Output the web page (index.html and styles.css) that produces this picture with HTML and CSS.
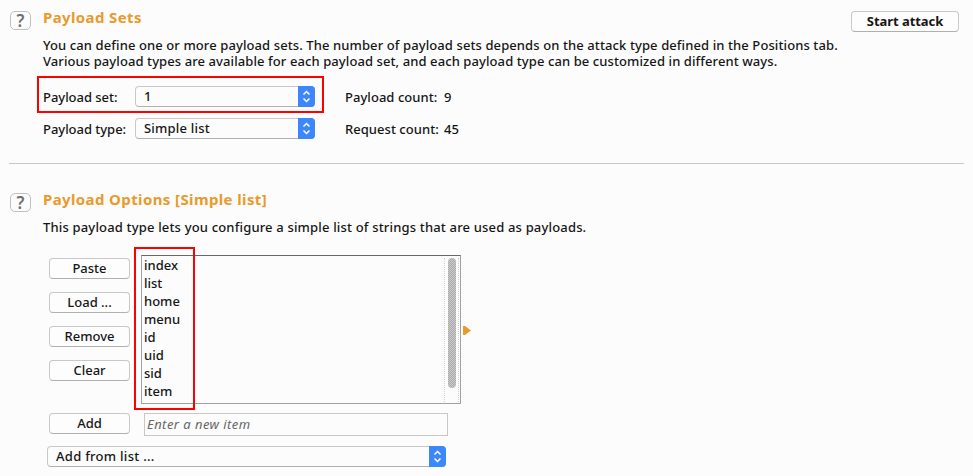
FILE: index.html
```
<!DOCTYPE html>
<html lang="en">
<head>
<meta charset="utf-8">
<title>Payloads</title>
<link rel="stylesheet" href="styles.css">
</head>
<body>
<section class="panel sets">
  <div class="help"><span>?</span></div>
  <div class="content">
    <h2 class="title">Payload Sets</h2>
    <div class="desc">
      <p class="line">You can define one or more payload sets. The number of payload sets depends on the attack type defined in the Positions tab.</p>
      <p class="line second">Various payload types are available for each payload set, and each payload type can be customized in different ways.</p>
    </div>
    <div class="row marked">
      <span class="label">Payload set:</span>
      <div class="select"><span class="value">1</span><span class="stepper"><svg viewBox="0 0 17 21"><path d="M5.5 8.5l3-3 3 3M5.5 12.5l3 3 3-3"/></svg></span></div>
      <span class="count">Payload count:</span><span class="num">9</span>
      <i class="mark"></i>
    </div>
    <div class="row">
      <span class="label">Payload type:</span>
      <div class="select"><span class="value">Simple list</span><span class="stepper"><svg viewBox="0 0 17 21"><path d="M5.5 8.5l3-3 3 3M5.5 12.5l3 3 3-3"/></svg></span></div>
      <span class="count">Request count:</span><span class="num">45</span>
    </div>
  </div>
  <button class="btn start">Start attack</button>
</section>
<hr class="divider">
<section class="panel options">
  <div class="help"><span>?</span></div>
  <div class="content">
    <h2 class="title">Payload Options [Simple list]</h2>
    <div class="desc">
      <p class="line">This payload type lets you configure a simple list of strings that are used as payloads.</p>
    </div>
    <div class="editor">
      <div class="buttons">
        <button class="btn">Paste</button>
        <button class="btn">Load ...</button>
        <button class="btn">Remove</button>
        <button class="btn">Clear</button>
      </div>
      <div class="listbox">
        <ul class="items"><li>index</li><li>list</li><li>home</li><li>menu</li><li>id</li><li>uid</li><li>sid</li><li>item</li></ul>
        <div class="track"><div class="thumb"></div></div>
        <i class="mark"></i>
      </div>
      <svg class="arrow" viewBox="0 0 8 9"><path d="M0 0h2l6 4.5L2 9H0z"/></svg>
    </div>
    <div class="add">
      <button class="btn">Add</button>
      <div class="field">Enter a new item</div>
    </div>
    <div class="select wide"><span class="value">Add from list ...</span><span class="stepper"><svg viewBox="0 0 17 21"><path d="M5.5 8.5l3-3 3 3M5.5 12.5l3 3 3-3"/></svg></span></div>
  </div>
</section>
</body>
</html>
```
FILE: styles.css
```
* { box-sizing: border-box; }
body {
  margin: 0;
  height: 476px;
  overflow: hidden;
  background: #fcfcfc;
  color: #161616;
  font: 500 13px/16px "Noto Sans", sans-serif;
  letter-spacing: 0.1px;
  white-space: nowrap;
}
.panel { display: flex; align-items: flex-start; padding-left: 10px; }
.sets { height: 163px; padding-top: 7px; }
.options { padding-top: 25px; }
.help {
  width: 21px;
  height: 19px;
  margin: 4px 12px 0 0;
  border: 1px solid #c0c0c0;
  border-radius: 5px;
  color: #707070;
  font: 600 17px/17px "Noto Sans", sans-serif;
  text-align: center;
}
.content { flex: 1; }
.title { margin: 0; font-size: 15px; font-weight: 700; line-height: 20px; letter-spacing: 0.38px; color: #e99a2c; }
.desc { margin: 10px 0 0; height: 32px; }
.line { margin: 0; }
.second { letter-spacing: 0.09px; }
.row { display: flex; align-items: center; position: relative; height: 21px; margin-top: 11px; }
.row.marked { margin-top: 17px; }
.label { width: 92px; letter-spacing: -0.03px; }
.count { width: 99px; margin-left: 30px; letter-spacing: 0.04px; }
.mark { position: absolute; border: 2px solid #fd0000; }
.row .mark { left: -6px; top: -10px; width: 287px; height: 37px; }
.select {
  display: flex;
  justify-content: space-between;
  width: 180px;
  height: 21px;
  border: 1px solid #c8c8c8;
  border-bottom-color: #b0b0b0;
  border-radius: 4px;
}
.value { padding-left: 8px; line-height: 19px; letter-spacing: 0.2px; }
.stepper { width: 17px; height: 21px; margin: -1px -1px 0 0; border-radius: 0 4px 4px 0; background: #3b87fb; }
.stepper svg { display: block; width: 17px; height: 21px; fill: none; stroke: #fff; stroke-width: 1.5; }
.btn {
  display: block;
  width: 81px;
  height: 21px;
  padding: 0;
  border: 1px solid #c8c8c8;
  border-bottom-color: #b0b0b0;
  border-radius: 4px;
  background: #fdfdfd;
  color: inherit;
  font: inherit;
  line-height: 19px;
  letter-spacing: 0;
}
.start { width: 108px; margin: 4px 14px 0 0; font-weight: 700; letter-spacing: -0.05px; }
.divider { height: 1px; margin: 0 9px; border: 0; background: #c8c8c8; }
.options .desc { height: 18px; }
.options .line { letter-spacing: 0.17px; }
.editor { display: flex; align-items: flex-start; margin: 18px 0 0 6px; }
.buttons { display: grid; gap: 13px; padding-top: 3px; }
.listbox {
  display: flex;
  justify-content: space-between;
  position: relative;
  width: 320px;
  height: 149px;
  margin-left: 11px;
  border: 1px solid #a0a0a0;
  border-top-color: #686868;
}
.listbox .mark { left: -8px; top: -9px; width: 61px; height: 163px; }
.items { margin: 0; padding: 0 0 0 2px; list-style: none; line-height: 18px; letter-spacing: 0; }
.track { width: 15px; margin: 2px 1px 1px 0; padding: 0 3px; border: 1px dotted #d0d0d0; border-width: 0 1px; }
.thumb {
  width: 8px;
  height: 130px;
  border-radius: 4px;
  background: repeating-conic-gradient(#aaa 0 25%, #cbcbcb 0 50%) 0 0 / 2px 2px;
}
.arrow { width: 8px; height: 9px; margin: 71px 0 0 2px; fill: #e99a2c; }
.add { display: flex; margin: 9px 0 0 6px; }
.field { width: 304px; height: 23px; margin-left: 14px; padding-left: 2px; border: 1px solid #c8c8c8; color: #666; font-style: italic; font-weight: 400; line-height: 21px; letter-spacing: 0.45px; }
.wide { width: 399px; margin: 10px 0 0 4px; }
.wide .value { letter-spacing: 0.28px; }
```
